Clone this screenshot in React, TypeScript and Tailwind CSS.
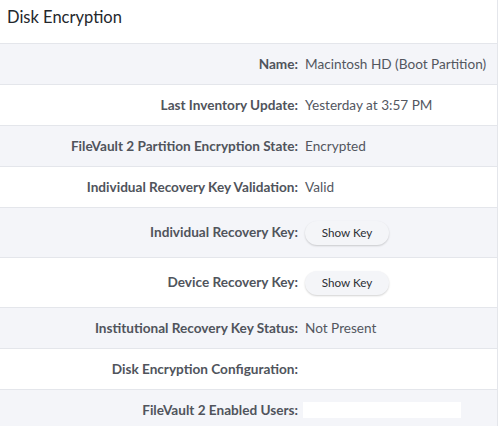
import React from "react";

const rows: { label: string; value?: string; kind?: "button" | "box" | "text" }[] = [
  { label: "Name:", value: "Macintosh HD (Boot Partition)" },
  { label: "Last Inventory Update:", value: "Yesterday at 3:57 PM" },
  { label: "FileVault 2 Partition Encryption State:", value: "Encrypted" },
  { label: "Individual Recovery Key Validation:", value: "Valid" },
  { label: "Individual Recovery Key:", kind: "button" },
  { label: "Device Recovery Key:", kind: "button" },
  { label: "Institutional Recovery Key Status:", value: "Not Present" },
  { label: "Disk Encryption Configuration:", value: "" },
  { label: "FileVault 2 Enabled Users:", kind: "box" },
];

export default function App() {
  return (
    <div
      className="w-[498px] h-[426px] overflow-hidden bg-white border-r border-[#e4e6eb]"
      style={{ fontFamily: "Lato, 'Noto Sans', sans-serif" }}
    >
      <div className="h-[44px] border-b border-[#e4e6eb] flex items-center pl-[7px] pb-[9px]">
        <span className="text-[16.5px] text-[#24272c]">Disk Encryption</span>
      </div>
      {rows.map((r, i) => (
        <div
          key={i}
          className={
            "flex items-center border-b border-[#e4e6eb] " +
            (i % 2 === 0 ? "bg-[#f4f5f9] " : "bg-white ") +
            (r.kind === "button" ? "h-[50px]" : "h-[41px]")
          }
        >
          <div className="w-[298px] text-right text-[13.6px] font-bold text-[#50545c] shrink-0">
            {r.label}
          </div>
          <div className="pl-[7px] text-[13.6px] text-[#53575f]">
            {r.kind === "button" ? (
              <button className="w-[84px] h-[24px] rounded-full bg-[#f4f5f8] shadow-[0_1px_2px_rgba(0,0,0,0.18)] text-[11.7px] text-[#2c2f34] flex items-center justify-center">
                Show Key
              </button>
            ) : r.kind === "box" ? (
              <div className="w-[158px] h-[16px] bg-white -ml-[2px]" />
            ) : (
              r.value
            )}
          </div>
        </div>
      ))}
    </div>
  );
}
